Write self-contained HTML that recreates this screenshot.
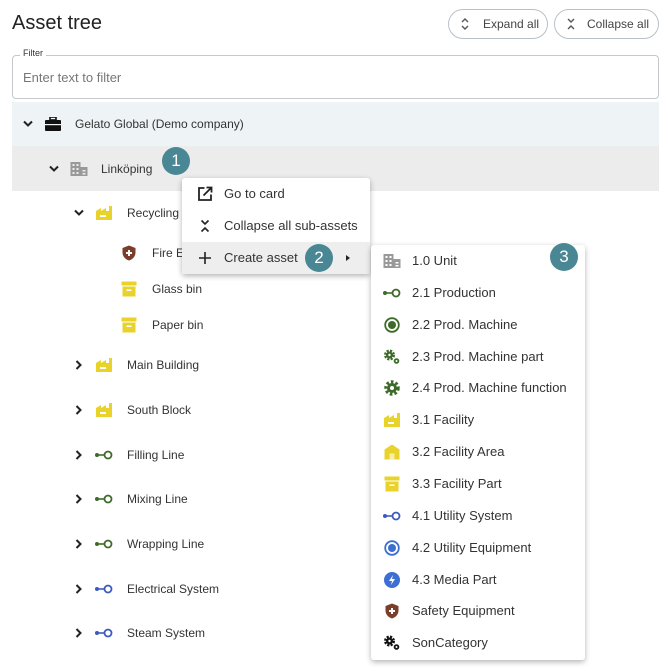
<!DOCTYPE html>
<html><head><meta charset="utf-8">
<style>
*{margin:0;padding:0;box-sizing:border-box}
body{width:670px;height:671px;background:#fff;font-family:"Liberation Sans",sans-serif;color:#333;position:relative;overflow:hidden}
.a{position:absolute}
.t{position:absolute;font-size:12px;line-height:14px;transform:translateY(-7px);white-space:nowrap;color:#333}
.m{position:absolute;font-size:13px;line-height:16px;transform:translateY(-8px);white-space:nowrap;color:#333}
.ic{position:absolute;transform:translate(-50%,-50%)}
.badge{position:absolute;width:28px;height:28px;border-radius:50%;background:#4a8794;color:#fff;font-size:17px;line-height:28px;text-align:center;transform:translate(-50%,-50%)}
.btn{position:absolute;height:30px;border:1px solid #b8c0c8;border-radius:15px;font-size:12px;line-height:28px;color:#444}
</style></head><body>
<div class="a" style="left:12px;top:12px;font-size:20px;color:#222">Asset tree</div>
<div class="btn" style="left:448px;top:9px;width:100px;padding-left:34px">Expand all</div>
<svg class="a" style="left:460px;top:17px" width="10" height="14" viewBox="0 0 10 14"><path d="M2 5l3-3 3 3M2 9l3 3 3-3" fill="none" stroke="#555" stroke-width="1.4"/></svg>
<div class="btn" style="left:554px;top:9px;width:105px;padding-left:32px">Collapse all</div>
<svg class="a" style="left:566px;top:17px" width="10" height="14" viewBox="0 0 10 14"><path d="M2 2l3 3 3-3M2 12l3-3 3 3" fill="none" stroke="#555" stroke-width="1.4"/></svg>
<div class="a" style="left:12px;top:55px;width:647px;height:44px;border:1px solid #c4c8cc;border-radius:4px"></div>
<div class="a" style="left:20px;top:48px;background:#fff;padding:0 3px;font-size:9px;color:#333">Filter</div>
<div class="a" style="left:23px;top:70px;font-size:13px;color:#777">Enter text to filter</div>
<div class="a" style="left:12px;top:102px;width:647px;height:44px;background:#eef3f6"></div>
<div class="a" style="left:12px;top:146px;width:647px;height:45px;background:#ececec"></div>

<!-- chevrons down -->
<svg class="ic" style="left:28px;top:124px" width="10" height="7"><path d="M1 1l4 4 4-4" fill="none" stroke="#222" stroke-width="2"/></svg>
<svg class="ic" style="left:54px;top:169px" width="10" height="7"><path d="M1 1l4 4 4-4" fill="none" stroke="#222" stroke-width="2"/></svg>
<svg class="ic" style="left:79px;top:213px" width="10" height="7"><path d="M1 1l4 4 4-4" fill="none" stroke="#222" stroke-width="2"/></svg>
<!-- chevrons right -->
<svg class="ic" style="left:79px;top:365px" width="7" height="10"><path d="M1 1l4 4-4 4" fill="none" stroke="#222" stroke-width="2"/></svg>
<svg class="ic" style="left:79px;top:410px" width="7" height="10"><path d="M1 1l4 4-4 4" fill="none" stroke="#222" stroke-width="2"/></svg>
<svg class="ic" style="left:79px;top:455px" width="7" height="10"><path d="M1 1l4 4-4 4" fill="none" stroke="#222" stroke-width="2"/></svg>
<svg class="ic" style="left:79px;top:499px" width="7" height="10"><path d="M1 1l4 4-4 4" fill="none" stroke="#222" stroke-width="2"/></svg>
<svg class="ic" style="left:79px;top:544px" width="7" height="10"><path d="M1 1l4 4-4 4" fill="none" stroke="#222" stroke-width="2"/></svg>
<svg class="ic" style="left:79px;top:589px" width="7" height="10"><path d="M1 1l4 4-4 4" fill="none" stroke="#222" stroke-width="2"/></svg>
<svg class="ic" style="left:79px;top:633px" width="7" height="10"><path d="M1 1l4 4-4 4" fill="none" stroke="#222" stroke-width="2"/></svg>

<!-- tree icons -->
<svg class="ic" style="left:53px;top:124px" width="16" height="14"><rect x="5" y="0" width="6" height="3" fill="none" stroke="#111" stroke-width="1.6"/><rect x="0" y="3" width="16" height="11" rx="1" fill="#111"/><rect x="0" y="7" width="16" height="1.2" fill="#eef3f6"/></svg>
<svg class="ic" style="left:79px;top:169px" width="17" height="14"><rect x="0" y="0" width="10" height="14" fill="#999"/><rect x="10" y="5" width="7" height="9" fill="#999"/><g fill="#ececec"><rect x="2" y="2" width="2" height="2"/><rect x="6" y="2" width="2" height="2"/><rect x="2" y="6" width="2" height="2"/><rect x="6" y="6" width="2" height="2"/><rect x="2" y="10" width="2" height="2"/><rect x="6" y="10" width="2" height="2"/><rect x="12" y="8" width="3" height="1.5"/><rect x="12" y="11" width="3" height="1.5"/></g></svg>
<svg class="ic" style="left:104px;top:213px" width="16" height="14"><path d="M0 5l5-3v3l5-3v3h3V0h3v14H0z" fill="#e9d32a"/><rect x="4" y="9" width="6" height="2" fill="#fff"/></svg>
<svg class="ic" style="left:129px;top:253px" width="13" height="15"><path d="M6.5 0L13 2.5V7c0 4-3 7-6.5 8C3 14 0 11 0 7V2.5z" fill="#7a3e2b"/><path d="M6.5 4.5v6M3.5 7.5h6" stroke="#fff" stroke-width="2"/></svg>
<svg class="ic" style="left:129px;top:289px" width="15" height="15"><rect x="0" y="0" width="15" height="4" fill="#e9d32a"/><rect x="1" y="5" width="13" height="10" fill="#e9d32a"/><rect x="5" y="8" width="5" height="1.5" fill="#fff"/></svg>
<svg class="ic" style="left:129px;top:325px" width="15" height="15"><rect x="0" y="0" width="15" height="4" fill="#e9d32a"/><rect x="1" y="5" width="13" height="10" fill="#e9d32a"/><rect x="5" y="8" width="5" height="1.5" fill="#fff"/></svg>
<svg class="ic" style="left:104px;top:365px" width="16" height="14"><path d="M0 5l5-3v3l5-3v3h3V0h3v14H0z" fill="#e9d32a"/><rect x="4" y="9" width="6" height="2" fill="#fff"/></svg>
<svg class="ic" style="left:104px;top:410px" width="16" height="14"><path d="M0 5l5-3v3l5-3v3h3V0h3v14H0z" fill="#e9d32a"/><rect x="4" y="9" width="6" height="2" fill="#fff"/></svg>
<svg class="ic" style="left:104px;top:455px" width="18" height="10"><circle cx="2" cy="5" r="2" fill="#3f6b2a"/><path d="M2 5h7" stroke="#3f6b2a" stroke-width="1.6"/><circle cx="13" cy="5" r="3.5" fill="none" stroke="#3f6b2a" stroke-width="1.8"/></svg>
<svg class="ic" style="left:104px;top:499px" width="18" height="10"><circle cx="2" cy="5" r="2" fill="#3f6b2a"/><path d="M2 5h7" stroke="#3f6b2a" stroke-width="1.6"/><circle cx="13" cy="5" r="3.5" fill="none" stroke="#3f6b2a" stroke-width="1.8"/></svg>
<svg class="ic" style="left:104px;top:544px" width="18" height="10"><circle cx="2" cy="5" r="2" fill="#3f6b2a"/><path d="M2 5h7" stroke="#3f6b2a" stroke-width="1.6"/><circle cx="13" cy="5" r="3.5" fill="none" stroke="#3f6b2a" stroke-width="1.8"/></svg>
<svg class="ic" style="left:104px;top:589px" width="18" height="10"><circle cx="2" cy="5" r="2" fill="#3c5bbf"/><path d="M2 5h7" stroke="#3c5bbf" stroke-width="1.6"/><circle cx="13" cy="5" r="3.5" fill="none" stroke="#3c5bbf" stroke-width="1.8"/></svg>
<svg class="ic" style="left:104px;top:633px" width="18" height="10"><circle cx="2" cy="5" r="2" fill="#3c5bbf"/><path d="M2 5h7" stroke="#3c5bbf" stroke-width="1.6"/><circle cx="13" cy="5" r="3.5" fill="none" stroke="#3c5bbf" stroke-width="1.8"/></svg>

<div class="t" style="left:75px;top:124px">Gelato Global (Demo company)</div>
<div class="t" style="left:101px;top:169px">Linköping</div>
<div class="t" style="left:127px;top:213px">Recycling s</div>
<div class="t" style="left:152px;top:253px">Fire Ex</div>
<div class="t" style="left:152px;top:289px">Glass bin</div>
<div class="t" style="left:152px;top:325px">Paper bin</div>
<div class="t" style="left:127px;top:365px">Main Building</div>
<div class="t" style="left:127px;top:410px">South Block</div>
<div class="t" style="left:127px;top:455px">Filling Line</div>
<div class="t" style="left:127px;top:499px">Mixing Line</div>
<div class="t" style="left:127px;top:544px">Wrapping Line</div>
<div class="t" style="left:127px;top:589px">Electrical System</div>
<div class="t" style="left:127px;top:633px">Steam System</div>

<!-- context menu -->
<div class="a" style="left:182px;top:178px;width:188px;height:96px;background:#fff;border-radius:3px;box-shadow:0 2px 6px rgba(0,0,0,.3)"></div>
<div class="a" style="left:182px;top:242px;width:188px;height:32px;background:#eeeeee"></div>
<svg class="ic" style="left:205px;top:194px" width="15" height="15"><path d="M7 1.5H1.5v12h12V8" fill="none" stroke="#222" stroke-width="1.8"/><path d="M6 9l7.5-7.5M9 1h5v5" fill="none" stroke="#222" stroke-width="1.8"/></svg>
<svg class="ic" style="left:205px;top:226px" width="9" height="13"><path d="M1 1l3.5 3.5L8 1M1 12l3.5-3.5L8 12" fill="none" stroke="#222" stroke-width="1.6"/></svg>
<svg class="ic" style="left:205px;top:258px" width="12" height="12"><path d="M6 0v12M0 6h12" stroke="#222" stroke-width="1.6"/></svg>
<div class="m" style="left:224px;top:194px">Go to card</div>
<div class="m" style="left:224px;top:226px">Collapse all sub-assets</div>
<div class="m" style="left:224px;top:258px">Create asset</div>
<svg class="ic" style="left:348px;top:258px" width="4" height="6"><path d="M0 0l4 3-4 3z" fill="#222"/></svg>

<!-- submenu -->
<div class="a" style="left:371px;top:245px;width:214px;height:415px;background:#fff;border-radius:3px;box-shadow:0 2px 6px rgba(0,0,0,.3)"></div>
<svg class="ic" style="left:392px;top:261px" width="17" height="14"><rect x="0" y="0" width="10" height="14" fill="#999"/><rect x="10" y="5" width="7" height="9" fill="#999"/><g fill="#fff"><rect x="2" y="2" width="2" height="2"/><rect x="6" y="2" width="2" height="2"/><rect x="2" y="6" width="2" height="2"/><rect x="6" y="6" width="2" height="2"/><rect x="2" y="10" width="2" height="2"/><rect x="6" y="10" width="2" height="2"/><rect x="12" y="8" width="3" height="1.5"/><rect x="12" y="11" width="3" height="1.5"/></g></svg>
<svg class="ic" style="left:392px;top:293px" width="18" height="10"><circle cx="2" cy="5" r="2" fill="#3f6b2a"/><path d="M2 5h7" stroke="#3f6b2a" stroke-width="1.6"/><circle cx="13" cy="5" r="3.5" fill="none" stroke="#3f6b2a" stroke-width="1.8"/></svg>
<svg class="ic" style="left:392px;top:325px" width="16" height="16"><circle cx="8" cy="8" r="6.8" fill="none" stroke="#3f6b2a" stroke-width="1.8"/><circle cx="8" cy="8" r="4" fill="#3f6b2a"/></svg>
<svg class="ic" style="left:392px;top:357px" width="17" height="16"><circle cx="6" cy="6" r="4" fill="none" stroke="#3f6b2a" stroke-width="3" stroke-dasharray="2 1.2"/><circle cx="6" cy="6" r="3.5" fill="#3f6b2a"/><circle cx="6" cy="6" r="1.2" fill="#fff"/><circle cx="13" cy="12" r="2.8" fill="#3f6b2a"/><circle cx="13" cy="12" r="1" fill="#fff"/></svg>
<svg class="ic" style="left:392px;top:388px" width="16" height="16"><circle cx="8" cy="8" r="6" fill="none" stroke="#3f6b2a" stroke-width="3.5" stroke-dasharray="2.5 2"/><circle cx="8" cy="8" r="5" fill="#3f6b2a"/><circle cx="8" cy="8" r="2" fill="#fff"/></svg>
<svg class="ic" style="left:392px;top:420px" width="16" height="14"><path d="M0 5l5-3v3l5-3v3h3V0h3v14H0z" fill="#e9d32a"/><rect x="4" y="9" width="6" height="2" fill="#fff"/></svg>
<svg class="ic" style="left:392px;top:452px" width="15" height="15"><path d="M0 5L7.5 0 15 5v10H0z" fill="#e9d32a"/><rect x="5" y="9" width="5" height="6" fill="#fff" opacity=".6"/></svg>
<svg class="ic" style="left:392px;top:484px" width="15" height="15"><rect x="0" y="0" width="15" height="4" fill="#e9d32a"/><rect x="1" y="5" width="13" height="10" fill="#e9d32a"/><rect x="5" y="8" width="5" height="1.5" fill="#fff"/></svg>
<svg class="ic" style="left:392px;top:516px" width="18" height="10"><circle cx="2" cy="5" r="2" fill="#3c5bbf"/><path d="M2 5h7" stroke="#3c5bbf" stroke-width="1.6"/><circle cx="13" cy="5" r="3.5" fill="none" stroke="#3c5bbf" stroke-width="1.8"/></svg>
<svg class="ic" style="left:392px;top:548px" width="16" height="16"><circle cx="8" cy="8" r="6.8" fill="none" stroke="#3c6fd1" stroke-width="1.8"/><circle cx="8" cy="8" r="4" fill="#3c6fd1"/></svg>
<svg class="ic" style="left:392px;top:580px" width="16" height="16"><circle cx="8" cy="8" r="8" fill="#3c6fd1"/><path d="M9 3L5 9h3l-1 4 4-6H8z" fill="#fff"/></svg>
<svg class="ic" style="left:392px;top:611px" width="13" height="15"><path d="M6.5 0L13 2.5V7c0 4-3 7-6.5 8C3 14 0 11 0 7V2.5z" fill="#7a3e2b"/><path d="M6.5 4.5v6M3.5 7.5h6" stroke="#fff" stroke-width="2"/></svg>
<svg class="ic" style="left:392px;top:643px" width="17" height="16"><circle cx="6" cy="6" r="4" fill="none" stroke="#111" stroke-width="3" stroke-dasharray="2 1.2"/><circle cx="6" cy="6" r="3.5" fill="#111"/><circle cx="6" cy="6" r="1.2" fill="#fff"/><circle cx="13" cy="12" r="2.8" fill="#111"/><circle cx="13" cy="12" r="1" fill="#fff"/></svg>
<div class="m" style="left:412px;top:261px">1.0 Unit</div>
<div class="m" style="left:412px;top:293px">2.1 Production</div>
<div class="m" style="left:412px;top:325px">2.2 Prod. Machine</div>
<div class="m" style="left:412px;top:357px">2.3 Prod. Machine part</div>
<div class="m" style="left:412px;top:388px">2.4 Prod. Machine function</div>
<div class="m" style="left:412px;top:420px">3.1 Facility</div>
<div class="m" style="left:412px;top:452px">3.2 Facility Area</div>
<div class="m" style="left:412px;top:484px">3.3 Facility Part</div>
<div class="m" style="left:412px;top:516px">4.1 Utility System</div>
<div class="m" style="left:412px;top:548px">4.2 Utility Equipment</div>
<div class="m" style="left:412px;top:580px">4.3 Media Part</div>
<div class="m" style="left:412px;top:611px">Safety Equipment</div>
<div class="m" style="left:412px;top:643px">SonCategory</div>

<div class="badge" style="left:176px;top:161px">1</div>
<div class="badge" style="left:319px;top:258px">2</div>
<div class="badge" style="left:564px;top:257px">3</div>
</body></html>
